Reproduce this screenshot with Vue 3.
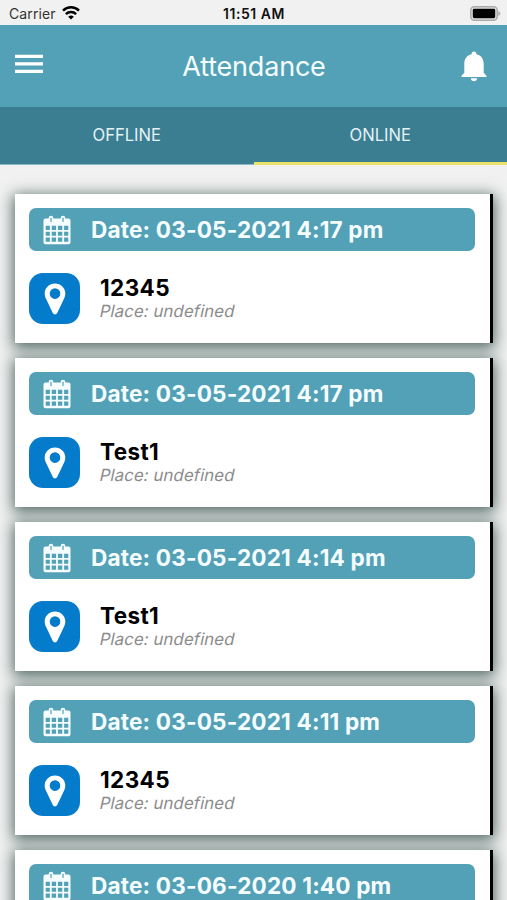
<template>
  <div class="screen">
    <div class="status-bar">
      <div class="carrier">
        <span class="carrier-name">Carrier</span>
        <svg class="wifi-icon" viewBox="0 0 18 14">
          <path d="M1 4.600a11.500 11.500 0 0 1 16 0" />
          <path d="M3.900 8.100a7.300 7.300 0 0 1 10.200 0" />
          <path class="wifi-dot" d="M9 13.600 6.200 10.800a4 4 0 0 1 5.600 0z" />
        </svg>
      </div>
      <span class="clock">11:51 AM</span>
      <svg class="battery-icon" viewBox="0 0 31 15">
        <rect x="0.8" y="0.8" width="26.4" height="13.4" rx="3.6" fill="#e4e4e4" stroke="#aaa" stroke-width="1.5" />
        <rect x="2.8" y="2.8" width="22.4" height="9.4" rx="1.4" fill="#000" />
        <path d="M28.3 5q2 1 2 2.5t-2 2.5z" fill="#aaa" />
      </svg>
    </div>

    <header class="header">
      <button class="icon-button" aria-label="Menu">
        <svg class="menu-icon" viewBox="0 0 28 20">
          <path d="M0 .8h28v3.3H0zM0 8.3h28v3.3H0zM0 15.8h28v3.3H0z" />
        </svg>
      </button>
      <h1 class="title">Attendance</h1>
      <button class="icon-button" aria-label="Notifications">
        <svg class="bell-icon" viewBox="0 0 26 31">
          <path d="M13 .5c1.600 0 2.400 1.100 2.400 2.700 5 1.200 7.300 4.800 7.300 10v8.600l2.800 2.900v1.300H.5v-1.300l2.800-2.900v-8.600c0-5.200 2.300-8.800 7.300-10C10.600 1.600 11.400.5 13 .5z" />
          <path d="M9.800 27.200h6.400c-.2 2-1.500 3-3.200 3s-3-1-3.200-3z" />
        </svg>
      </button>
    </header>

    <nav class="tabs">
      <button
        v-for="tab in tabs"
        :key="tab"
        :class="['tab', { 'tab--active': tab === activeTab }]"
        @click="activeTab = tab"
      >
        {{ tab }}
      </button>
    </nav>

    <main class="list">
      <article v-for="record in records" :key="record.id" class="card">
        <div class="card-date">
          <svg class="calendar-icon" viewBox="0 0 28 30">
            <path
              fill-rule="evenodd"
              d="M2.500 3.500h23a2 2 0 0 1 2 2V27.200a2 2 0 0 1-2 2h-23a2 2 0 0 1-2-2V5.500a2 2 0 0 1 2-2zM2.700 10.800v4.200h4.200v-4.200zM8.700 10.800v4.200h4.400v-4.200zM14.900 10.800v4.200h4.400v-4.200zM21.100 10.800v4.200h4.200v-4.200zM2.700 16.800v4h4.200v-4zM8.700 16.800v4h4.400v-4zM14.900 16.800v4h4.400v-4zM21.100 16.800v4h4.200v-4zM2.700 22.600v4.200h4.200v-4.200zM8.700 22.600v4.200h4.400v-4.200zM14.900 22.600v4.200h4.400v-4.200zM21.100 22.600v4.200h4.200v-4.200z"
            />
            <rect class="calendar-ring" x="5.700" y="0.800" width="4.600" height="7.400" rx="2.300" />
            <rect class="calendar-ring" x="17.700" y="0.800" width="4.600" height="7.400" rx="2.300" />
            <rect class="calendar-slot" x="7.400" y="2.600" width="1.200" height="4.600" rx="0.600" />
            <rect class="calendar-slot" x="19.400" y="2.600" width="1.200" height="4.600" rx="0.600" />
          </svg>
          <span>Date: {{ record.date }}</span>
        </div>
        <div class="card-body">
          <div class="pin-badge">
            <svg class="pin-icon" viewBox="0 0 22 32">
              <path
                fill-rule="evenodd"
                d="M11 .5c5.900 0 10.300 4.400 10.300 10.100 0 2-.5 3.500-1.300 5.200l-6.800 14.300c-.9 1.900-3.500 1.900-4.400 0L2 15.800C1.200 14.100.7 12.600.7 10.600.7 4.900 5.100.5 11 .5zM11 5.300a5.300 5.300 0 1 0 0 10.600 5.300 5.300 0 0 0 0-10.600z"
              />
            </svg>
          </div>
          <div class="card-text">
            <div class="card-name">{{ record.name }}</div>
            <div class="card-place">Place: {{ record.place }}</div>
          </div>
        </div>
      </article>
    </main>
  </div>
</template>

<script setup>
import { ref } from 'vue'

const tabs = ['OFFLINE', 'ONLINE']
const activeTab = ref('ONLINE')

const records = [
  { id: 1, date: '03-05-2021 4:17 pm', name: '12345', place: 'undefined' },
  { id: 2, date: '03-05-2021 4:17 pm', name: 'Test1', place: 'undefined' },
  { id: 3, date: '03-05-2021 4:14 pm', name: 'Test1', place: 'undefined' },
  { id: 4, date: '03-05-2021 4:11 pm', name: '12345', place: 'undefined' },
  { id: 5, date: '03-06-2020 1:40 pm', name: '', place: '' }
]
</script>

<style>
body {
  margin: 0;
  overflow: hidden;
}
</style>

<style scoped>
.screen {
  display: flex;
  flex-direction: column;
  height: 100vh;
  overflow: hidden;
  background: #f1f1f1;
  font-family: Inter, "Liberation Sans", sans-serif;
}

button {
  padding: 0;
  border: 0;
  background: none;
  font-family: inherit;
}

svg {
  display: block;
}

.status-bar {
  display: grid;
  grid-template-columns: 1fr auto 1fr;
  align-items: center;
  flex: none;
  height: 25px;
  padding: 2px 6px 0 9px;
  box-sizing: border-box;
  color: #111;
}

.carrier {
  display: flex;
  align-items: center;
  gap: 6px;
}

.carrier-name {
  font-size: 14px;
  letter-spacing: 0.1px;
  color: #333;
}

.wifi-icon {
  width: 18px;
  height: 14px;
  margin-bottom: 2px;
  fill: none;
  stroke: #000;
  stroke-width: 2.5;
}

.wifi-icon .wifi-dot {
  fill: #000;
  stroke: none;
}

.clock {
  padding-right: 2px;
  font-size: 14px;
  font-weight: 600;
  letter-spacing: 0.55px;
}

.battery-icon {
  justify-self: end;
  width: 31px;
  height: 15px;
  margin-bottom: 1px;
}

.header {
  display: flex;
  align-items: center;
  justify-content: space-between;
  flex: none;
  height: 82px;
  padding: 0 20px 0 15px;
  box-sizing: border-box;
  background: #53a1b7;
}

.menu-icon {
  width: 28px;
  height: 20px;
  margin-bottom: 4px;
  fill: #fff;
}

.title {
  margin: 0;
  padding-left: 4px;
  font-size: 27px;
  font-weight: 400;
  letter-spacing: -0.2px;
  color: #f5fdff;
}

.bell-icon {
  width: 26px;
  height: 31px;
  fill: #fff;
}

.tabs {
  display: flex;
  flex: none;
  height: 58px;
  background: #3c7e91;
}

.tab {
  flex: 1;
  padding-bottom: 2px;
  border-bottom: 1px solid #8fb8c4;
  font-size: 16.6px;
  color: #e3f2f6;
}

.tab--active {
  padding-bottom: 0;
  border-bottom: 3px solid #e9e36b;
}

.list {
  display: flex;
  flex-direction: column;
  gap: 15px;
  padding: 29px 14px 0 15px;
}

.card {
  flex: none;
  height: 149px;
  padding: 14px 15px 0 14px;
  border-right: 3px solid #000;
  box-sizing: border-box;
  background: #fff;
  box-shadow: 0 3px 14px 2px rgba(28, 62, 54, 0.75);
}

.card-date {
  display: flex;
  align-items: center;
  gap: 20px;
  height: 43px;
  padding-left: 14px;
  border-radius: 7px;
  background: #53a1b7;
  font-size: 22.6px;
  font-weight: 700;
  letter-spacing: 0.16px;
  color: #f5fdff;
  white-space: nowrap;
}

.calendar-icon {
  width: 28px;
  height: 30px;
  fill: #f5fdff;
}

.calendar-slot {
  fill: #53a1b7;
}

.card-body {
  display: flex;
  gap: 20px;
  margin-top: 22px;
}

.pin-badge {
  display: flex;
  align-items: center;
  justify-content: center;
  width: 51px;
  height: 51px;
  border-radius: 14px;
  background: #047ccb;
}

.pin-icon {
  width: 22px;
  height: 32px;
  fill: #fff;
}

.card-text {
  padding-top: 1px;
}

.card-name {
  font-size: 22.5px;
  font-weight: 700;
  letter-spacing: 0.4px;
  line-height: 27px;
  color: #000;
}

/* slants the upright face so the letters keep their roman shapes */
.card-place {
  font-size: 16.8px;
  letter-spacing: 0.1px;
  line-height: 20px;
  color: #8c8c8c;
  transform: skewX(-12deg);
}
</style>
